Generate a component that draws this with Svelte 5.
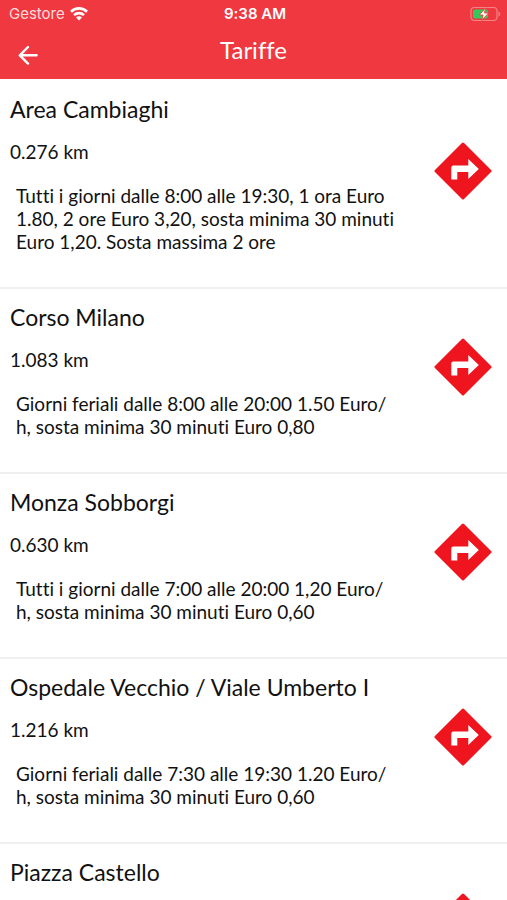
<script>
  let areas = [
    { name: "Area Cambiaghi", distance: "0.276 km", info: "Tutti i giorni dalle 8:00 alle 19:30, 1 ora Euro 1.80, 2 ore Euro 3,20, sosta minima 30 minuti Euro 1,20. Sosta massima 2 ore" },
    { name: "Corso Milano", distance: "1.083 km", info: "Giorni feriali dalle 8:00 alle 20:00 1.50 Euro/h, sosta minima 30 minuti Euro 0,80" },
    { name: "Monza Sobborgi", distance: "0.630 km", info: "Tutti i giorni dalle 7:00 alle 20:00 1,20 Euro/h, sosta minima 30 minuti Euro 0,60" },
    { name: "Ospedale Vecchio / Viale Umberto I", distance: "1.216 km", info: "Giorni feriali dalle 7:30 alle 19:30 1.20 Euro/h, sosta minima 30 minuti Euro 0,60" },
    { name: "Piazza Castello" }
  ];

  // let lines wrap after a slash
  function breakable(text) {
    return text.replaceAll("/", "/\u200b");
  }
</script>

<div class="app">
  <header>
    <div class="status">
      <div class="carrier">
        <span>Gestore</span>
        <svg width="18" height="14" viewBox="0 0 18 14" fill="none" stroke="#fff" stroke-width="2.6">
          <path d="M1 4.7a11.4 11.4 0 0 1 16 0" />
          <path d="M4 8.1a7.2 7.2 0 0 1 10 0" />
          <path d="M9 13.4L6 10.4a4.2 4.2 0 0 1 6 0z" fill="#fff" stroke="none" />
        </svg>
      </div>
      <time>9:38 AM</time>
      <div class="battery">
        <svg width="31" height="16" viewBox="0 0 31 16">
          <rect x="1" y="1.5" width="26" height="13" rx="3.5" fill="none" stroke="#f68385" stroke-width="1.2" />
          <path d="M28.5 5.5v5q1.8-.8 1.8-2.5t-1.8-2.5z" fill="#f68385" />
          <rect x="3" y="3.5" width="15" height="9" rx="2" fill="#35c759" />
          <path d="M15.6 1.8L9.4 9h3.8l-1.4 5.4L18.4 7h-4z" fill="#fff" stroke="#ef3840" stroke-width=".8" />
        </svg>
      </div>
    </div>
    <nav>
      <button class="back" aria-label="Indietro">
        <svg width="20" height="20" viewBox="0 0 20 20" fill="none" stroke="#fff" stroke-width="2.4" stroke-linecap="round" stroke-linejoin="round">
          <path d="M18.6 10.3H2M10 2L1.8 10.3l8.2 8.3" />
        </svg>
      </button>
      <h1>Tariffe</h1>
    </nav>
  </header>

  <ul>
    {#each areas as area}
      <li>
        <div class="text">
          <h2>{area.name}</h2>
          {#if area.distance}
            <p class="distance">{area.distance}</p>
            <p class="info">{breakable(area.info)}</p>
          {/if}
        </div>
        <button class="go" aria-label="Indicazioni">
          <svg width="58" height="58" viewBox="0 0 58 58">
            <path d="M29 2L56 29 29 56 2 29z" fill="#ee151f" stroke="#ee151f" stroke-width="3" stroke-linejoin="round" />
            <path d="M17.3 37.5V25.5q0-2 2-2h15v-6.5L44.8 27 34.3 37V30h-11v7.5z" fill="#fff" />
          </svg>
        </button>
      </li>
    {/each}
  </ul>
</div>

<style>
  :global(body) {
    margin: 0;
    background: #fff;
  }

  .app {
    display: flex;
    flex-direction: column;
    height: 100vh;
    font-family: Lato, sans-serif;
    font-variant-ligatures: none;
    color: #111;
  }

  header {
    flex: none;
    background: #ef3840;
    color: #fff;
  }

  .status {
    display: grid;
    grid-template-columns: 1fr auto 1fr;
    align-items: center;
    height: 27px;
    padding: 0 6px 0 9px;
    font-family: Inter, sans-serif;
    font-size: 15px;
  }

  .carrier {
    display: flex;
    align-items: center;
    gap: 5px;
    color: #ffdcdc;
  }

  time {
    font-weight: 600;
  }

  .battery {
    display: flex;
    justify-content: flex-end;
  }

  nav {
    display: grid;
    grid-template-columns: 56px 1fr 56px;
    height: 52px;
  }

  button {
    display: flex;
    align-items: center;
    justify-content: center;
    padding: 0;
    border: 0;
    background: none;
    cursor: pointer;
  }

  .back {
    height: 56px;
  }

  h1 {
    margin: 0;
    font-size: 24px;
    font-weight: 400;
    line-height: 46px;
    text-align: center;
  }

  ul {
    flex: 1;
    min-height: 0;
    margin: 0;
    padding: 2px 0 0;
    overflow-y: auto;
    scrollbar-width: none;
    list-style: none;
  }

  li {
    display: flex;
    align-items: center;
    justify-content: space-between;
    box-sizing: border-box;
    min-height: 185px;
    border-bottom: 2px solid #f0f0f0;
  }

  .text {
    flex: 1;
    align-self: flex-start;
    padding: 12px 0 34px 10px;
  }

  h2 {
    margin: 0;
    font-size: 23px;
    font-weight: 400;
    line-height: 32px;
  }

  p {
    margin: 0;
    font-size: 19px;
    line-height: 23px;
  }

  .distance {
    margin-top: 15px;
  }

  .info {
    margin-top: 21px;
    padding-left: 6px;
  }

  .go {
    flex: none;
    padding: 0 15px 27px 36px;
  }
</style>
